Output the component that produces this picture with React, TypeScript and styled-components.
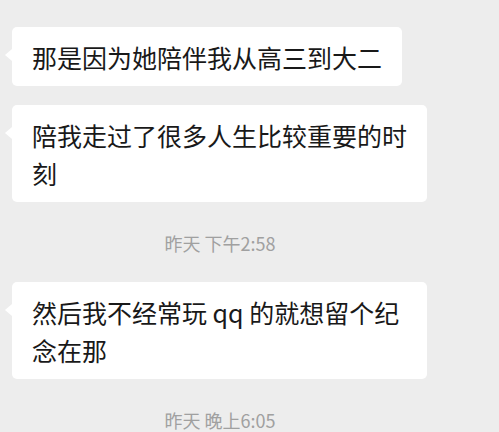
import styled, { createGlobalStyle } from 'styled-components'

const GlobalStyle = createGlobalStyle`
  html, body {
    margin: 0;
    padding: 0;
    background: #ededed;
  }
  body {
    font-family: 'Noto Sans CJK SC', 'Noto Sans', sans-serif;
  }
`

type Item =
  | { kind: 'msg'; text: string }
  | { kind: 'time'; text: string }

const items: Item[] = [
  { kind: 'msg', text: '那是因为她陪伴我从高三到大二' },
  { kind: 'msg', text: '陪我走过了很多人生比较重要的时刻' },
  { kind: 'time', text: '昨天 下午2:58' },
  { kind: 'msg', text: '然后我不经常玩 qq 的就想留个纪念在那' },
  { kind: 'time', text: '昨天 晚上6:05' },
]

export default function App() {
  return (
    <>
      <GlobalStyle />
      <ChatPage>
        <ChatList>
          {items.map((item, i) =>
            item.kind === 'msg' ? (
              <Bubble key={i}>{item.text}</Bubble>
            ) : (
              <TimeStamp key={i}>{item.text}</TimeStamp>
            )
          )}
        </ChatList>
      </ChatPage>
    </>
  )
}

const ChatPage = styled.div`
  width: 499px;
  height: 432px;
  overflow: hidden;
  background: #ededed;
`

const ChatList = styled.div`
  display: flex;
  flex-direction: column;
  align-items: flex-start;
  width: 440px;
  padding-top: 27px;
  gap: 19px;
`

const Bubble = styled.div`
  position: relative;
  box-sizing: border-box;
  margin-left: 12px;
  max-width: 415px;
  padding: 11px 20px 10px;
  background: #ffffff;
  border-radius: 5px;
  color: #191919;
  font-size: 25px;
  line-height: 38px;
  word-break: break-all;

  &::before {
    content: '';
    position: absolute;
    left: -7px;
    top: 22px;
    border-top: 6px solid transparent;
    border-bottom: 6px solid transparent;
    border-right: 7px solid #ffffff;
  }
`

const TimeStamp = styled.div`
  align-self: stretch;
  margin: 10px 0 8px;
  text-align: center;
  color: #a0a0a0;
  font-size: 18px;
  line-height: 24px;
`
